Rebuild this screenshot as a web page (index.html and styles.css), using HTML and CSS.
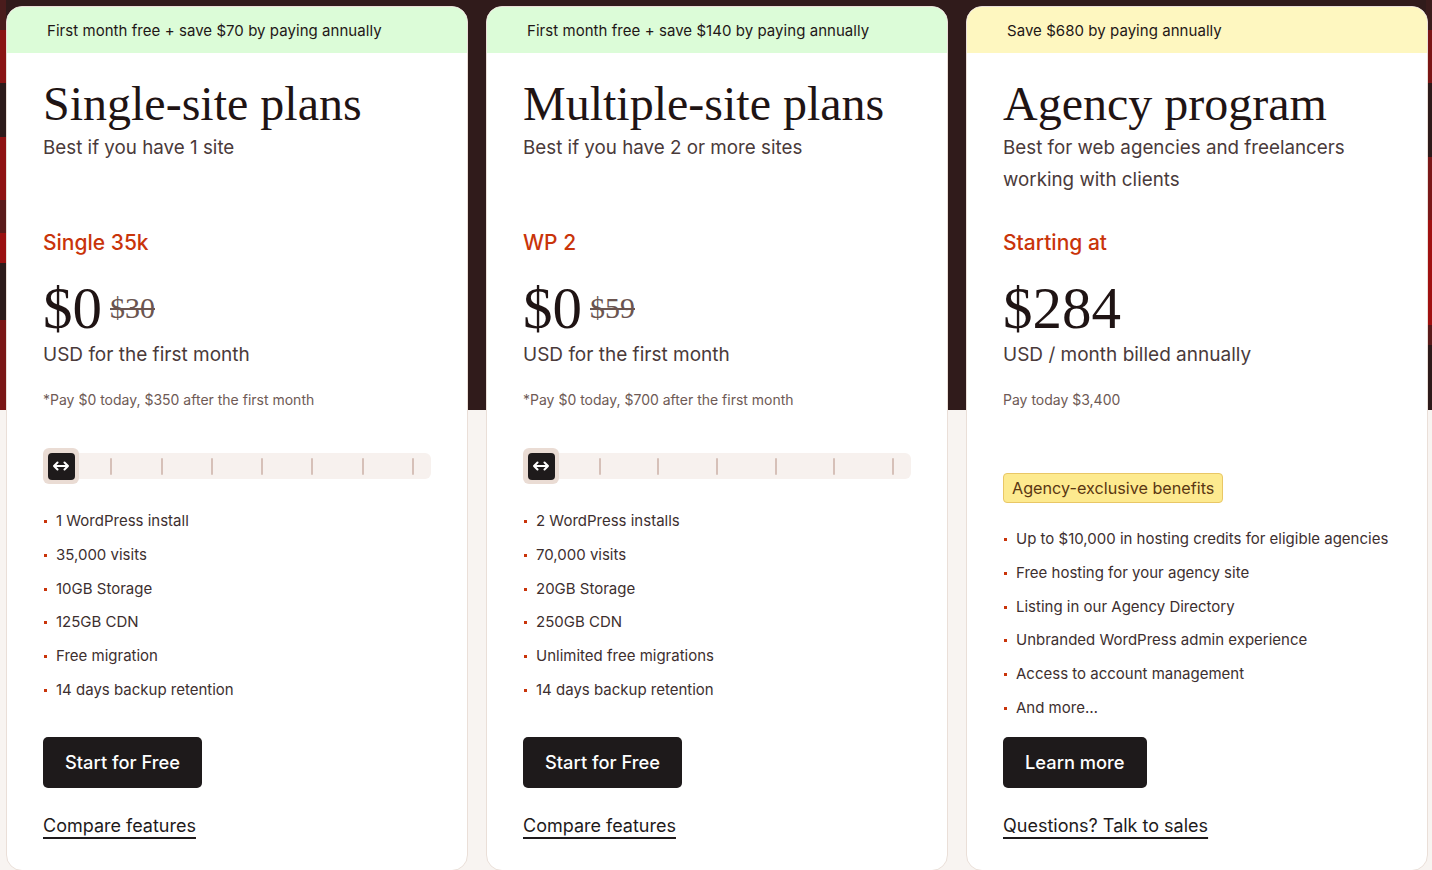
FILE: index.html
```html
<!DOCTYPE html>
<html lang="en">
<head>
<meta charset="utf-8">
<title>Pricing plans</title>
<link rel="stylesheet" href="styles.css">
</head>
<body>
<main class="page">
  <div class="cards">
    <section class="card">
      <div class="banner banner-green">First month free + save $70 by paying annually</div>
      <div class="body">
        <h2 class="title">Single-site plans</h2>
        <p class="subtitle">Best if you have 1 site</p>
        <p class="plan-name">Single 35k</p>
        <div class="price-row">
          <span class="price">$0</span>
          <s class="old-price">$30</s>
        </div>
        <p class="price-note">USD for the first month</p>
        <p class="fine">*Pay $0 today, $350 after the first month</p>
        <div class="slider">
          <div class="track">
            <span class="tick"></span><span class="tick"></span><span class="tick"></span><span class="tick"></span>
            <span class="tick"></span><span class="tick"></span><span class="tick"></span><span class="tick"></span>
          </div>
          <div class="thumb"><span class="thumb-inner"><svg width="16" height="10" viewBox="0 0 16 10"><path d="M1 5h14M4.5 1.5 1 5l3.5 3.5M11.5 1.5 15 5l-3.5 3.5" fill="none" stroke="#fff" stroke-width="2" stroke-linecap="round" stroke-linejoin="round"/></svg></span></div>
        </div>
        <ul class="features">
          <li>1 WordPress install</li>
          <li>35,000 visits</li>
          <li>10GB Storage</li>
          <li>125GB CDN</li>
          <li>Free migration</li>
          <li>14 days backup retention</li>
        </ul>
        <div class="actions">
          <a class="btn" href="#">Start for Free</a>
          <a class="link" href="#">Compare features</a>
        </div>
      </div>
    </section>

    <section class="card">
      <div class="banner banner-green">First month free + save $140 by paying annually</div>
      <div class="body">
        <h2 class="title">Multiple-site plans</h2>
        <p class="subtitle">Best if you have 2 or more sites</p>
        <p class="plan-name">WP 2</p>
        <div class="price-row">
          <span class="price">$0</span>
          <s class="old-price">$59</s>
        </div>
        <p class="price-note">USD for the first month</p>
        <p class="fine">*Pay $0 today, $700 after the first month</p>
        <div class="slider">
          <div class="track">
            <span class="tick"></span><span class="tick"></span><span class="tick"></span><span class="tick"></span>
            <span class="tick"></span><span class="tick"></span><span class="tick"></span>
          </div>
          <div class="thumb"><span class="thumb-inner"><svg width="16" height="10" viewBox="0 0 16 10"><path d="M1 5h14M4.5 1.5 1 5l3.5 3.5M11.5 1.5 15 5l-3.5 3.5" fill="none" stroke="#fff" stroke-width="2" stroke-linecap="round" stroke-linejoin="round"/></svg></span></div>
        </div>
        <ul class="features">
          <li>2 WordPress installs</li>
          <li>70,000 visits</li>
          <li>20GB Storage</li>
          <li>250GB CDN</li>
          <li>Unlimited free migrations</li>
          <li>14 days backup retention</li>
        </ul>
        <div class="actions">
          <a class="btn" href="#">Start for Free</a>
          <a class="link" href="#">Compare features</a>
        </div>
      </div>
    </section>

    <section class="card">
      <div class="banner banner-yellow">Save $680 by paying annually</div>
      <div class="body">
        <h2 class="title">Agency program</h2>
        <p class="subtitle">Best for web agencies and freelancers working with clients</p>
        <p class="plan-name">Starting at</p>
        <div class="price-row">
          <span class="price">$284</span>
        </div>
        <p class="price-note">USD / month billed annually</p>
        <p class="fine">Pay today $3,400</p>
        <div class="badge-wrap"><span class="badge">Agency-exclusive benefits</span></div>
        <ul class="features features-agency">
          <li>Up to $10,000 in hosting credits for eligible agencies</li>
          <li>Free hosting for your agency site</li>
          <li>Listing in our Agency Directory</li>
          <li>Unbranded WordPress admin experience</li>
          <li>Access to account management</li>
          <li>And more…</li>
        </ul>
        <div class="actions">
          <a class="btn" href="#">Learn more</a>
          <a class="link" href="#">Questions? Talk to sales</a>
        </div>
      </div>
    </section>
  </div>
</main>
</body>
</html>
```

FILE: styles.css
```css
* { box-sizing: border-box; }

html, body {
  margin: 0;
  padding: 0;
}

body {
  font-family: Inter, "Noto Sans", "Liberation Sans", sans-serif;
  color: #3a2c2c;
  background: #f8f4f1;
}

.page {
  min-height: 870px;
  background:
    linear-gradient(to bottom,
      #4a1c1c 0 30px, #8a1414 30px 83px, #2d1a1a 83px 137px,
      #8f1212 137px 200px, #5a1a1a 200px 233px, #9a1010 233px 263px,
      #2d1a1a 263px 320px, #7a1616 320px 410px, transparent 410px) left top / 6px 100% no-repeat,
    linear-gradient(to bottom,
      #3a1c1c 0 30px, #7a1515 30px 83px, #2d1a1a 83px 157px,
      #7a1818 157px 220px, #a01010 220px 325px, #5a1a1a 325px 345px,
      #2d1a1a 345px 410px, transparent 410px) right top / 6px 100% no-repeat,
    linear-gradient(to bottom, #301b1b 0 410px, #f8f4f1 410px) no-repeat;
  padding: 6px 4px 0 6px;
}

.cards {
  display: grid;
  grid-template-columns: repeat(3, 462px);
  gap: 18px;
}

.card {
  background: #fff;
  border: 1px solid #eadfd8;
  border-radius: 16px;
  overflow: hidden;
  display: flex;
  flex-direction: column;
}

.banner {
  height: 46px;
  display: flex;
  align-items: center;
  padding-left: 40px;
  font-size: 15px;
  color: #1f1717;
  letter-spacing: 0.05px;
}
.banner-green { background: #dcfcd8; }
.banner-yellow { background: #fef7c0; }

.body {
  flex: 1;
  display: flex;
  flex-direction: column;
  padding: 0 36px 30px;
}

.title {
  margin: 23px 0 0;
  font-family: "Liberation Serif", "Times New Roman", serif;
  font-weight: 400;
  font-size: 48px;
  line-height: 56px;
  color: #1f1414;
}

.subtitle {
  margin: 0;
  font-size: 18.8px;
  line-height: 32px;
  min-height: 64px;
  color: #4a3a3a;
  max-width: 360px;
}

.plan-name {
  margin: 33px 0 0;
  font-size: 21px;
  line-height: 28px;
  color: #c9340a;
  font-weight: 500;
}

.price-row {
  margin-top: 18px;
  display: flex;
  align-items: center;
  gap: 8px;
  height: 66px;
}

.price {
  font-family: "Liberation Serif", "Times New Roman", serif;
  font-size: 59px;
  line-height: 66px;
  color: #1f1414;
}

.old-price {
  font-family: "Liberation Serif", "Times New Roman", serif;
  font-size: 30px;
  line-height: 32px;
  color: #6b5550;
  text-decoration-thickness: 2px;
}

.price-note {
  margin: 0;
  font-size: 19px;
  line-height: 28px;
  color: #4a3a3a;
}

.fine {
  margin: 21px 0 0;
  font-size: 14px;
  line-height: 20px;
  color: #6e5a55;
}

.slider {
  position: relative;
  margin-top: 38px;
  height: 36px;
  width: 388px;
}

.track {
  margin-top: 5px;
  height: 26px;
  background: #f7f1ee;
  border-radius: 6px;
  display: flex;
  align-items: center;
  justify-content: space-between;
  padding: 0 17px;
}

.tick {
  width: 2px;
  height: 17px;
  background: #d6c0b8;
  border-radius: 1px;
}

.thumb {
  position: absolute;
  left: 0;
  top: 0;
  width: 36px;
  height: 36px;
  border-radius: 6px;
  background: #eadcd4;
  display: flex;
  align-items: center;
  justify-content: center;
}

.thumb-inner {
  width: 27px;
  height: 27px;
  border-radius: 4px;
  background: #1e1a1b;
  display: flex;
  align-items: center;
  justify-content: center;
}

.badge-wrap {
  margin-top: 63px;
  display: flex;
}

.badge {
  display: inline-block;
  height: 30px;
  line-height: 28px;
  padding: 0 8px;
  background: #fdea8f;
  border: 1px solid #e9c766;
  border-radius: 4px;
  font-size: 16.2px;
  color: #5a3712;
}

.features {
  list-style: none;
  margin: 20px 0 0;
  padding: 0;
}
.features-agency { margin-top: 19px; }

.features li {
  position: relative;
  height: 33.8px;
  line-height: 34px;
  padding-left: 13px;
  font-size: 15px;
  color: #3d2f2f;
}

.features li::before {
  content: "";
  position: absolute;
  left: 1px;
  top: 16px;
  width: 3px;
  height: 3px;
  background: #c9340a;
}

.actions {
  margin-top: auto;
  padding-top: 12px;
  display: flex;
  flex-direction: column;
  align-items: flex-start;
}

.btn {
  display: inline-flex;
  align-items: center;
  height: 51px;
  padding: 0 22px;
  background: #1e1a1b;
  color: #fff;
  border-radius: 5px;
  font-size: 18.3px;
  font-weight: 500;
  text-decoration: none;
}

.link {
  margin-top: 24px;
  font-size: 18px;
  line-height: 28px;
  color: #1e1a1b;
  text-decoration: underline;
  text-decoration-thickness: 2px;
  text-underline-offset: 5px;
}
```
